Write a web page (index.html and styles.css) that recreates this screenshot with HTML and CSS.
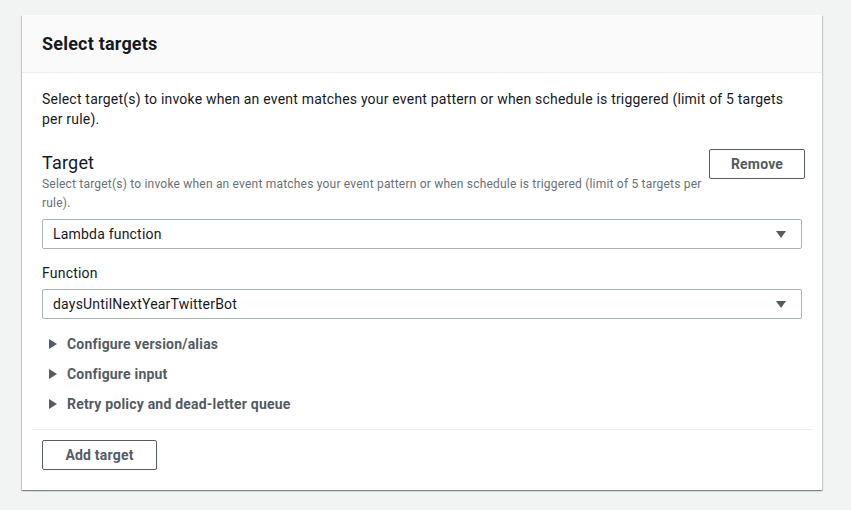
FILE: index.html
```html
<!DOCTYPE html>
<html lang="en">
<head>
<meta charset="utf-8">
<title>Select targets</title>
<link rel="stylesheet" href="styles.css">
</head>
<body>
<div class="card">
  <div class="card-header">
    <h2 class="card-title">Select targets</h2>
  </div>
  <div class="card-body">
    <p class="intro">Select target(s) to invoke when an event matches your event pattern or when schedule is triggered (limit of 5 targets per rule).</p>

    <div class="target">
      <div class="target-head">
        <div class="target-info">
          <div class="target-label">Target</div>
          <div class="target-desc">Select target(s) to invoke when an event matches your event pattern or when schedule is triggered (limit of 5 targets per rule).</div>
        </div>
        <button class="btn btn-remove">Remove</button>
      </div>

      <div class="select select-first">
        <span class="select-value">Lambda function</span>
        <svg class="caret" width="10" height="7" viewBox="0 0 10 7"><path d="M0 0H10L5 7Z" fill="#545b64"/></svg>
      </div>

      <div class="field-label">Function</div>
      <div class="select">
        <span class="select-value">daysUntilNextYearTwitterBot</span>
        <svg class="caret" width="10" height="7" viewBox="0 0 10 7"><path d="M0 0H10L5 7Z" fill="#545b64"/></svg>
      </div>

      <div class="expanders">
        <div class="expander">
          <svg class="arrow" width="8" height="10" viewBox="0 0 8 10"><path d="M0 0L8 5L0 10Z" fill="#545b64"/></svg>
          <span>Configure version/alias</span>
        </div>
        <div class="expander">
          <svg class="arrow" width="8" height="10" viewBox="0 0 8 10"><path d="M0 0L8 5L0 10Z" fill="#545b64"/></svg>
          <span>Configure input</span>
        </div>
        <div class="expander">
          <svg class="arrow" width="8" height="10" viewBox="0 0 8 10"><path d="M0 0L8 5L0 10Z" fill="#545b64"/></svg>
          <span>Retry policy and dead-letter queue</span>
        </div>
      </div>
    </div>

    <hr class="divider">
    <button class="btn btn-add">Add target</button>
  </div>
</div>
</body>
</html>
```

FILE: styles.css
```css
* { box-sizing: border-box; }

html, body {
  margin: 0;
  background: #f2f3f3;
}

body {
  padding: 15px 22px;
  font-family: Roboto, "Liberation Sans", Arial, sans-serif;
  color: #16191f;
  font-size: 14px;
  line-height: 20px;
  letter-spacing: 0.2px;
}

.card {
  width: 800px;
  background: #ffffff;
  box-shadow: 0 1px 1px 0 rgba(0, 28, 36, 0.3),
              1px 1px 1px 0 rgba(0, 28, 36, 0.15),
              -1px 1px 1px 0 rgba(0, 28, 36, 0.15);
}

.card-header {
  height: 58px;
  padding: 0 20px;
  display: flex;
  align-items: center;
  background: #fafafa;
  border-bottom: 1px solid #eaeded;
}

.card-title {
  margin: 0;
  font-size: 18px;
  font-weight: 700;
  line-height: 24px;
  color: #16191f;
}

.card-body {
  padding: 16px 20px 20px;
}

.intro {
  margin: 0;
}

.target {
  margin-top: 20px;
}

.target-head {
  display: flex;
  align-items: flex-start;
  gap: 4px;
}

.target-info {
  flex: 1;
  padding-top: 2px;
}

.target-label {
  font-size: 18px;
  line-height: 24px;
}

.target-desc {
  font-size: 12px;
  line-height: 19px;
  color: #687078;
}

.btn {
  font-family: inherit;
  font-size: 14px;
  font-weight: 700;
  line-height: 20px;
  letter-spacing: 0.2px;
  color: #545b64;
  background: #ffffff;
  border: 1px solid #545b64;
  border-radius: 2px;
  height: 30px;
  padding: 4px 20px;
  cursor: pointer;
}

.btn-remove {
  width: 96px;
  margin-right: -3px;
  flex: none;
}

.select {
  height: 30px;
  border: 1px solid #aab7b8;
  border-radius: 2px;
  display: flex;
  align-items: center;
  justify-content: space-between;
  padding: 0 15px 0 10px;
}

.select-first {
  margin-top: 6px;
}

.caret {
  display: block;
}

.field-label {
  margin-top: 14px;
  margin-bottom: 6px;
}

.expanders {
  margin-top: 10px;
}

.expander {
  display: flex;
  align-items: center;
  gap: 10px;
  padding: 5px 0 5px 7px;
  font-weight: 700;
  color: #545b64;
}

.arrow {
  display: block;
}

.divider {
  margin: 10px -10px 10px;
  border: 0;
  border-top: 1px solid #eaeded;
  height: 0;
}

.btn-add {
  width: 115px;
  display: block;
}
```
